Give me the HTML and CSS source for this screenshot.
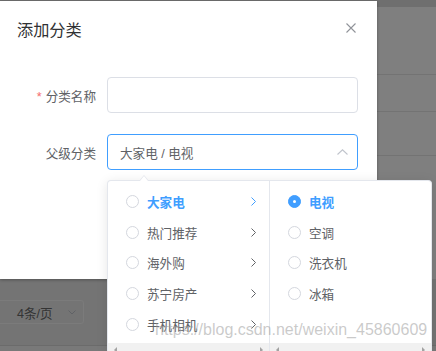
FILE: index.html
```html
<!DOCTYPE html>
<html lang="zh-CN">
<head>
    <meta charset="UTF-8">
    <title>添加分类</title>
    <link rel="stylesheet" href="styles.css">
</head>
<body>
    <div class="page">
        <div class="page-head"></div>
        <div class="table">
            <div class="tr tr-1"></div>
            <div class="tr tr-2"></div>
            <div class="tr tr-3"></div>
            <div class="tr tr-4"></div>
        </div>
        <div class="pager">
            <div class="sizes">
                <span>4条/页</span>
                <svg class="sizes-arrow" width="8" height="5" viewBox="0 0 8 5"><path d="M0.5 0.5 L4 4 L7.5 0.5" fill="none" stroke="#c0c4cc" stroke-width="1"/></svg>
            </div>
        </div>
        <div class="page-foot"></div>
    </div>

    <div class="modal"></div>

    <div class="dialog">
        <div class="dialog-header">
            <span class="dialog-title">添加分类</span>
            <svg class="dialog-close" width="10" height="10" viewBox="0 0 10 10"><path d="M0.5 0.5 L9.5 9.5 M9.5 0.5 L0.5 9.5" stroke="#909399" stroke-width="1.1"/></svg>
        </div>
        <div class="dialog-body">
            <div class="form-item">
                <label class="form-label"><span class="required">*</span>分类名称</label>
                <div class="input"></div>
            </div>
            <div class="form-item">
                <label class="form-label">父级分类</label>
                <div class="input is-focus">
                    <span class="input-text">大家电 / 电视</span>
                    <svg class="input-arrow" width="11" height="6" viewBox="0 0 11 6"><path d="M0.5 5.5 L5.5 0.8 L10.5 5.5" fill="none" stroke="#c0c4cc" stroke-width="1.1"/></svg>
                </div>
            </div>
        </div>
    </div>

    <div class="cascader">
        <div class="cascader-arrow"></div>
        <div class="menu menu-first">
            <ul class="menu-list">
                <li class="node in-path"><span class="radio"></span><span class="node-label">大家电</span><svg class="node-arrow" width="5" height="9" viewBox="0 0 5 9"><path d="M0.5 0.5 L4.5 4.5 L0.5 8.5" fill="none" stroke="currentColor" stroke-width="1"/></svg></li>
                <li class="node"><span class="radio"></span><span class="node-label">热门推荐</span><svg class="node-arrow" width="5" height="9" viewBox="0 0 5 9"><path d="M0.5 0.5 L4.5 4.5 L0.5 8.5" fill="none" stroke="currentColor" stroke-width="1"/></svg></li>
                <li class="node"><span class="radio"></span><span class="node-label">海外购</span><svg class="node-arrow" width="5" height="9" viewBox="0 0 5 9"><path d="M0.5 0.5 L4.5 4.5 L0.5 8.5" fill="none" stroke="currentColor" stroke-width="1"/></svg></li>
                <li class="node"><span class="radio"></span><span class="node-label">苏宁房产</span><svg class="node-arrow" width="5" height="9" viewBox="0 0 5 9"><path d="M0.5 0.5 L4.5 4.5 L0.5 8.5" fill="none" stroke="currentColor" stroke-width="1"/></svg></li>
                <li class="node"><span class="radio"></span><span class="node-label">手机相机</span><svg class="node-arrow" width="5" height="9" viewBox="0 0 5 9"><path d="M0.5 0.5 L4.5 4.5 L0.5 8.5" fill="none" stroke="currentColor" stroke-width="1"/></svg></li>
            </ul>
            <div class="scrollbar"><span class="sb-left"></span><span class="sb-right"></span></div>
        </div>
        <div class="menu">
            <ul class="menu-list">
                <li class="node in-path"><span class="radio is-checked"></span><span class="node-label">电视</span></li>
                <li class="node"><span class="radio"></span><span class="node-label">空调</span></li>
                <li class="node"><span class="radio"></span><span class="node-label">洗衣机</span></li>
                <li class="node"><span class="radio"></span><span class="node-label">冰箱</span></li>
            </ul>
            <div class="scrollbar"><span class="sb-left"></span><span class="sb-right"></span></div>
        </div>
    </div>

    <div class="watermark">https://blog.csdn.net/weixin_45860609</div>
</body>
</html>
```

FILE: styles.css
```css
* { margin: 0; padding: 0; box-sizing: border-box; }
body {
    width: 436px;
    height: 351px;
    overflow: hidden;
    position: relative;
    background: #fff;
    font-family: "Liberation Sans", "Noto Sans CJK SC", sans-serif;
    color: #606266;
}
ul { list-style: none; }

/* page behind the modal */
.page { display: flex; flex-direction: column; height: 100%; }
.page-head { height: 7px; background: #dfdfdf; }
.tr { border-bottom: 1px solid #e6e6e6; }
.tr-1 { height: 68px; }
.tr-2 { height: 37px; }
.tr-3 { height: 44px; }
.tr-4 { height: 123px; border-bottom: none; }
.pager {
    height: 67px;
    padding-top: 21px;
    background: #e8e8e8;
    border-bottom: 1px solid #d6d6d6;
}
.sizes {
    width: 104px;
    height: 24px;
    margin-left: -20px;
    padding: 0 7px 0 36px;
    border: 1px solid #f6f6f6;
    border-radius: 3px;
    display: flex;
    align-items: center;
    justify-content: space-between;
    font-size: 12.6px;
    color: #686868;
}
.page-foot { flex: 1; background: #f2f2f2; }

.modal {
    position: absolute;
    top: 0; left: 0; right: 0; bottom: 0;
    background: rgba(0,0,0,0.5);
}

/* dialog */
.dialog {
    position: absolute;
    left: 0;
    top: 1px;
    width: 377px;
    height: 278px;
    background: #fff;
    box-shadow: 0 1px 3px rgba(0,0,0,0.3);
}
.dialog-header { position: relative; padding: 18px 17px 9px; }
.dialog-title {
    display: block;
    font-size: 16.2px;
    line-height: 22px;
    color: #303133;
}
.dialog-close { position: absolute; top: 22px; right: 21px; }
.dialog-body { padding: 27px 19px 0 17px; }
.form-item { display: flex; align-items: center; margin-bottom: 21px; }
.form-label {
    width: 90px;
    padding-right: 11px;
    text-align: right;
    font-size: 12.6px;
    color: #606266;
}
.required { color: #f56c6c; margin-right: 4px; }
.input {
    width: 251px;
    height: 36px;
    border: 1px solid #dcdfe6;
    border-radius: 4px;
    padding: 0 9px 0 12px;
    display: flex;
    align-items: center;
    justify-content: space-between;
}
.input.is-focus { border-color: #409eff; }
.input-text { font-size: 12.6px; color: #606266; }

/* cascader dropdown */
.cascader {
    position: absolute;
    left: 107px;
    top: 180px;
    height: 171px;
    display: flex;
    background: #fff;
    border: 1px solid #e4e7ed;
    border-bottom: none;
    border-radius: 4px 4px 0 0;
    box-shadow: 0 2px 12px rgba(0,0,0,0.1);
}
.cascader-arrow {
    position: absolute;
    left: 31px;
    top: -6px;
    width: 0; height: 0;
    border: 5px solid transparent;
    border-top: none;
    border-bottom: 6px solid #e4e7ed;
}
.cascader-arrow::after {
    content: "";
    position: absolute;
    left: -4px;
    top: 1px;
    border: 4px solid transparent;
    border-top: none;
    border-bottom: 5px solid #fff;
}
.menu { width: 161px; display: flex; flex-direction: column; overflow: hidden; }
.menu-first { width: 162px; border-right: 1px solid #e4e7ed; }
.menu-list { flex: 1; padding-top: 5.4px; }
.node {
    height: 30.6px;
    padding: 0 13px 0 18px;
    display: flex;
    align-items: center;
    font-size: 12.6px;
    color: #606266;
}
.node-label { flex: 1; }
.node-arrow { color: #606266; }
.node.in-path { color: #409eff; font-weight: bold; }
.node.in-path .node-arrow { color: #409eff; }
.radio {
    width: 13px;
    height: 13px;
    margin-right: 8px;
    border: 1px solid #d4d7de;
    border-radius: 50%;
    background: #fff;
    position: relative;
}
.radio.is-checked { background: #409eff; border-color: #409eff; }
.radio.is-checked::after {
    content: "";
    position: absolute;
    left: 50%; top: 50%;
    width: 3.6px; height: 3.6px;
    margin: -1.8px 0 0 -1.8px;
    border-radius: 50%;
    background: #fff;
}
.scrollbar {
    height: 8px;
    background: #f1f1f1;
    display: flex;
    justify-content: space-between;
    padding: 4px 6px 0;
    overflow: hidden;
}
.sb-left, .sb-right { width: 0; height: 0; border: 3px solid transparent; }
.sb-left { border-left: none; border-right: 3px solid #a3a3a3; }
.sb-right { border-right: none; border-left: 3px solid #a3a3a3; }

.watermark {
    position: absolute;
    left: 155px;
    top: 321px;
    font-family: "Liberation Sans", sans-serif;
    font-size: 16px;
    line-height: 18px;
    color: rgba(150,150,150,0.5);
    white-space: nowrap;
}
```
